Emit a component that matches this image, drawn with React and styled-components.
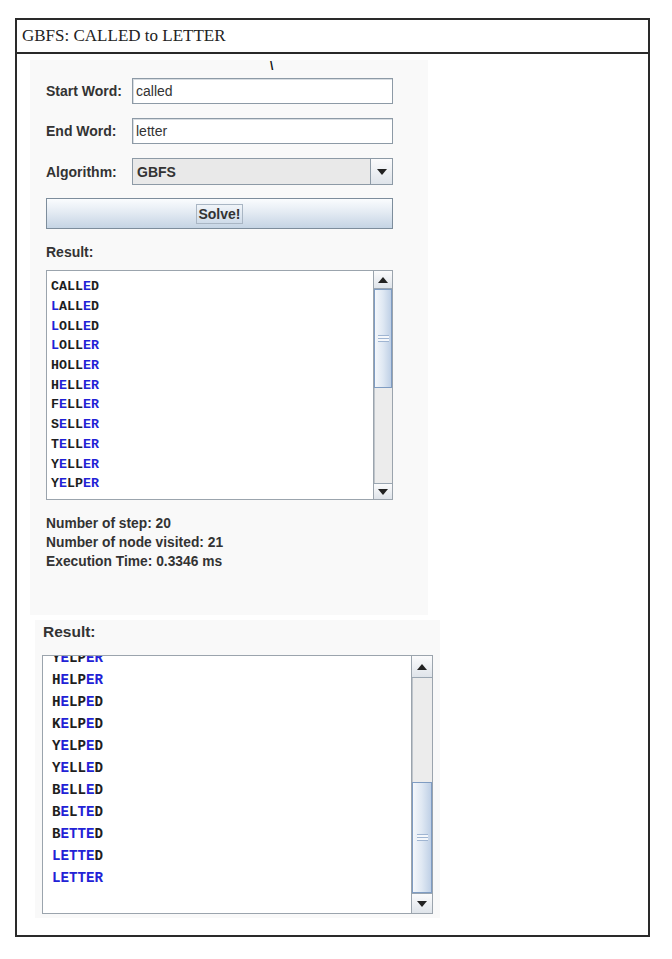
import React from 'react';
import styled, { createGlobalStyle, css } from 'styled-components';

const GlobalStyle = createGlobalStyle`
  body {
    margin: 0;
    background: #fff;
    font-family: "Liberation Sans", Arial, sans-serif;
  }
`;

const TARGET = 'LETTER';
const path = [
  'CALLED', 'LALLED', 'LOLLED', 'LOLLER', 'HOLLER', 'HELLER', 'FELLER',
  'SELLER', 'TELLER', 'YELLER', 'YELPER', 'HELPER', 'HELPED', 'KELPED',
  'YELPED', 'YELLED', 'BELLED', 'BELTED', 'BETTED', 'LETTED', 'LETTER',
];

const Page = styled.div`
  padding: 18px 15px;
`;

const Frame = styled.div`
  width: 635px;
  height: 919px;
  box-sizing: border-box;
  border: 2px solid #2a2a2a;
  display: flex;
  flex-direction: column;
`;

const Caption = styled.div`
  height: 34px;
  box-sizing: border-box;
  border-bottom: 2px solid #2a2a2a;
  display: flex;
  align-items: center;
  padding-left: 5px;
  font-family: "Liberation Serif", "Times New Roman", serif;
  font-size: 17px;
  color: #222;
`;

const Body = styled.div`
  padding: 6px 0 0 13px;
  display: flex;
  flex-direction: column;
  gap: 5px;
`;

const Shot = styled.div`
  position: relative;
  background: #f9f9f9;
  box-sizing: border-box;
  width: ${p => p.$w}px;
  height: ${p => p.$h}px;
  margin-left: ${p => p.$ml || 0}px;
  padding: ${p => p.$pad};
`;

const Cursor = styled.span`
  position: absolute;
  left: 240px;
  top: -1px;
  font-size: 12px;
  font-weight: bold;
  color: #111;
`;

const Form = styled.div`
  display: grid;
  grid-template-columns: 86px 261px;
  row-gap: 14px;
  align-items: center;
`;

const Label = styled.div`
  font-weight: bold;
  font-size: 14px;
  color: #333;
`;

const Field = styled.div`
  height: 26px;
  box-sizing: border-box;
  border: 1px solid #8d9aa6;
  background: #fff;
  display: flex;
  align-items: center;
  padding-left: 3px;
  font-size: 14px;
  color: #333;
  box-shadow: inset 1px 1px 0 #d8dde2;
`;

const Combo = styled.div`
  height: 27px;
  box-sizing: border-box;
  border: 1px solid #8d9aa6;
  background: #e9e9e9;
  display: flex;
  align-items: stretch;
`;

const ComboText = styled.div`
  flex: 1;
  display: flex;
  align-items: center;
  padding-left: 4px;
  font-weight: bold;
  font-size: 14px;
  color: #333;
  border-right: 1px solid #8d9aa6;
`;

const ArrowBox = styled.div`
  width: ${p => p.$w || 21}px;
  height: ${p => p.$h || 'auto'};
  flex-shrink: 0;
  box-sizing: border-box;
  display: flex;
  align-items: center;
  justify-content: center;
  background: linear-gradient(#fbfbfc, #dfe4ea);
  ${p => p.$edge === 'top' && css`border-bottom: 1px solid #9aa6b2;`}
  ${p => p.$edge === 'bottom' && css`border-top: 1px solid #9aa6b2;`}
`;

const Tri = ({ down }) => (
  <svg width="10" height="6" viewBox="0 0 10 6">
    <path d={down ? 'M0 0 H10 L5 6 Z' : 'M0 6 H10 L5 0 Z'} fill="#222" />
  </svg>
);

const SolveButton = styled.div`
  grid-column: 1 / 3;
  margin-top: -1px;
  height: 31px;
  box-sizing: border-box;
  border: 1px solid #7d8d9c;
  background: linear-gradient(#fafcfe 0%, #e4ebf3 45%, #c5d4e4 100%);
  display: flex;
  align-items: center;
  justify-content: center;
`;

const Focus = styled.span`
  border: 1px solid #a9b6c4;
  padding: 1px 1px;
  font-weight: bold;
  font-size: 14px;
  color: #333;
`;

const ResultLabel = styled.div`
  font-weight: bold;
  font-size: ${p => p.$size}px;
  color: #333;
  margin: ${p => p.$m};
`;

const ListBox = styled.div`
  width: ${p => p.$w}px;
  height: ${p => p.$h}px;
  box-sizing: border-box;
  border: 1px solid #9ba4ad;
  background: #fff;
  display: flex;
`;

const Rows = styled.div`
  flex: 1;
  overflow: hidden;
  padding: ${p => p.$pad};
`;

const Scrolled = styled.div`
  margin-top: ${p => p.$offset}px;
`;

const Row = styled.div`
  height: ${p => p.$rh}px;
  flex-shrink: 0;
  display: flex;
  align-items: center;
  font-family: "Liberation Mono", "Courier New", monospace;
  font-weight: bold;
  font-size: ${p => p.$fs}px;
`;

const Ch = styled.span`
  color: ${p => (p.$hit ? '#2222d6' : '#1e1e1e')};
`;

const Bar = styled.div`
  width: ${p => p.$w}px;
  flex-shrink: 0;
  box-sizing: border-box;
  border-left: 1px solid #9ba4ad;
  display: flex;
  flex-direction: column;
  background: #ececec;
`;

const Track = styled.div`
  height: ${p => p.$h}px;
  flex-shrink: 0;
  background: #ececec;
  border-left: 1px solid #bfc5cb;
`;

const Thumb = styled.div`
  height: ${p => p.$h}px;
  flex-shrink: 0;
  box-sizing: border-box;
  border: 1px solid #7f9cc2;
  background: linear-gradient(90deg, #f4f7fb 0%, #dfe8f3 50%, #bfd0e6 100%);
  display: flex;
  align-items: center;
  justify-content: center;
`;

const Grip = styled.div`
  width: 11px;
  height: 7px;
  background: repeating-linear-gradient(#9fb5d2 0 1px, #f4f7fb 1px 3px);
`;

const Fill = styled.div`
  flex: 1;
  background: #ececec;
  border-left: 1px solid #bfc5cb;
`;

const Stats = styled.div`
  margin-top: 14px;
  font-weight: bold;
  font-size: 13.8px;
  line-height: 19px;
  color: #333;
`;

function Word({ word, rh, fs }) {
  return (
    <Row $rh={rh} $fs={fs}>
      {word.split('').map((c, i) => (
        <Ch key={i} $hit={c === TARGET[i]}>{c}</Ch>
      ))}
    </Row>
  );
}

function ScrollBar({ w, btn, before, thumb }) {
  return (
    <Bar $w={w}>
      <ArrowBox $w={w - 1} $h={`${btn}px`} $edge="top"><Tri /></ArrowBox>
      {before > 0 && <Track $h={before} />}
      <Thumb $h={thumb}><Grip /></Thumb>
      <Fill />
      <ArrowBox $w={w - 1} $h={`${btn - 2}px`} $edge="bottom"><Tri down /></ArrowBox>
    </Bar>
  );
}

export default function App() {
  return (
    <Page>
      <GlobalStyle />
      <Frame>
        <Caption>GBFS: CALLED to LETTER</Caption>
        <Body>
          <Shot $w={398} $h={555} $pad="18px 0 0 16px">
            <Cursor>\</Cursor>
            <Form>
              <Label>Start Word:</Label>
              <Field>called</Field>
              <Label>End Word:</Label>
              <Field>letter</Field>
              <Label>Algorithm:</Label>
              <Combo>
                <ComboText>GBFS</ComboText>
                <ArrowBox><Tri down /></ArrowBox>
              </Combo>
              <SolveButton><Focus>Solve!</Focus></SolveButton>
            </Form>
            <ResultLabel $size={14} $m="15px 0 10px">Result:</ResultLabel>
            <ListBox $w={347} $h={230}>
              <Rows $pad="6px 0 0 4px">
                {path.slice(0, 11).map(w => (
                  <Word key={w} word={w} rh={19.7} fs={13.3} />
                ))}
              </Rows>
              <ScrollBar w={19} btn={18} before={0} thumb={99} />
            </ListBox>
            <Stats>
              <div>Number of step: 20</div>
              <div>Number of node visited: 21</div>
              <div>Execution Time: 0.3346 ms</div>
            </Stats>
          </Shot>
          <Shot $w={405} $h={298} $ml={5} $pad="3px 0 0 7px">
            <ResultLabel $size={15.5} $m="0 0 14px 1px">Result:</ResultLabel>
            <ListBox $w={391} $h={259}>
              <Rows $pad="0 0 0 9px">
                <Scrolled $offset={-9}>
                  {path.slice(10).map(w => (
                    <Word key={w} word={w} rh={22} fs={14.2} />
                  ))}
                </Scrolled>
              </Rows>
              <ScrollBar w={21} btn={22} before={104} thumb={111} />
            </ListBox>
          </Shot>
        </Body>
      </Frame>
    </Page>
  );
}
